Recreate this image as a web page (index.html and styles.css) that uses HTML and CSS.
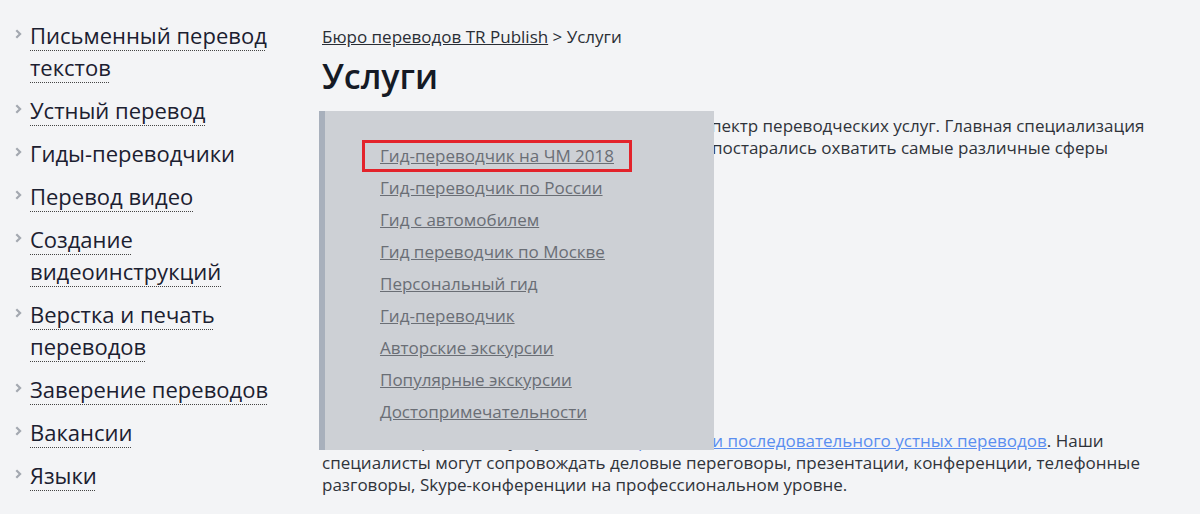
FILE: index.html
```html
<!DOCTYPE html>
<html lang="ru">
<head>
<meta charset="utf-8">
<title>Услуги</title>
<link rel="stylesheet" href="styles.css">
</head>
<body>
<div class="page">
  <aside class="sidebar">
    <ul class="side-menu">
      <li><svg class="chev" viewBox="0 0 7 10" width="7" height="10"><path d="M1.3 1.2l3.8 3.8-3.8 3.8" fill="none" stroke="currentColor" stroke-width="2.2"/></svg><a href="#">Письменный перевод текстов</a></li>
      <li><svg class="chev" viewBox="0 0 7 10" width="7" height="10"><path d="M1.3 1.2l3.8 3.8-3.8 3.8" fill="none" stroke="currentColor" stroke-width="2.2"/></svg><a href="#">Устный перевод</a></li>
      <li><svg class="chev" viewBox="0 0 7 10" width="7" height="10"><path d="M1.3 1.2l3.8 3.8-3.8 3.8" fill="none" stroke="currentColor" stroke-width="2.2"/></svg><span class="current">Гиды-переводчики</span></li>
      <li><svg class="chev" viewBox="0 0 7 10" width="7" height="10"><path d="M1.3 1.2l3.8 3.8-3.8 3.8" fill="none" stroke="currentColor" stroke-width="2.2"/></svg><a href="#">Перевод видео</a></li>
      <li><svg class="chev" viewBox="0 0 7 10" width="7" height="10"><path d="M1.3 1.2l3.8 3.8-3.8 3.8" fill="none" stroke="currentColor" stroke-width="2.2"/></svg><a href="#">Создание видеоинструкций</a></li>
      <li><svg class="chev" viewBox="0 0 7 10" width="7" height="10"><path d="M1.3 1.2l3.8 3.8-3.8 3.8" fill="none" stroke="currentColor" stroke-width="2.2"/></svg><a href="#">Верстка и печать переводов</a></li>
      <li><svg class="chev" viewBox="0 0 7 10" width="7" height="10"><path d="M1.3 1.2l3.8 3.8-3.8 3.8" fill="none" stroke="currentColor" stroke-width="2.2"/></svg><a href="#">Заверение переводов</a></li>
      <li><svg class="chev" viewBox="0 0 7 10" width="7" height="10"><path d="M1.3 1.2l3.8 3.8-3.8 3.8" fill="none" stroke="currentColor" stroke-width="2.2"/></svg><a href="#">Вакансии</a></li>
      <li><svg class="chev" viewBox="0 0 7 10" width="7" height="10"><path d="M1.3 1.2l3.8 3.8-3.8 3.8" fill="none" stroke="currentColor" stroke-width="2.2"/></svg><a href="#">Языки</a></li>
    </ul>
  </aside>
  <main class="content">
    <div class="crumbs"><a href="#">Бюро переводов TR Publish</a> &gt; Услуги</div>
    <h1 class="title">Услуги</h1>
    <p class="text intro">Наше бюро предоставляет клиентам полный спектр переводческих услуг. Главная специализация является письменный перевод текстов, но мы постарались охватить самые различные сферы деятельности.</p>
    <p class="text oral">Компания предлагает услуги для <a class="blue" href="#">синхронного и последовательного устных переводов</a>. Наши специалисты могут сопровождать деловые переговоры, презентации, конференции, телефонные разговоры, Skype-конференции на профессиональном уровне.</p>

    <nav class="dropdown">
      <ul class="drop-list">
        <li class="hl"><a href="#">Гид-переводчик на ЧМ 2018</a></li>
        <li><a href="#">Гид-переводчик по России</a></li>
        <li><a href="#">Гид с автомобилем</a></li>
        <li><a href="#">Гид переводчик по Москве</a></li>
        <li><a href="#">Персональный гид</a></li>
        <li><a href="#">Гид-переводчик</a></li>
        <li><a href="#">Авторские экскурсии</a></li>
        <li><a href="#">Популярные экскурсии</a></li>
        <li><a href="#">Достопримечательности</a></li>
      </ul>
    </nav>
  </main>
</div>
</body>
</html>
```

FILE: styles.css
```css
* { box-sizing: border-box; }
html, body { margin: 0; padding: 0; }
body {
  background: #f3f4f6;
  font-family: "Open Sans", "Noto Sans", sans-serif;
  color: #2b2f36;
  width: 1200px;
  height: 514px;
  overflow: hidden;
}
.page {
  display: flex;
  align-items: flex-start;
}
.sidebar {
  width: 322px;
  flex: none;
  padding: 19px 0 0 15px;
}
.side-menu {
  list-style: none;
  margin: 0;
  padding: 0;
}
.side-menu li {
  display: flex;
  align-items: flex-start;
  font-size: 22px;
  line-height: 32px;
  margin-bottom: 11px;
  color: #1b2030;
}
.chev {
  flex: none;
  color: #a3a8b0;
  margin-top: 10px;
  margin-right: 8px;
}
.side-menu a, .side-menu .current {
  color: #1b2030;
  text-decoration: none;
}
.side-menu li > a, .side-menu li > .current { display: block; max-width: 250px; }
.side-menu a {
  text-decoration: underline dotted #444;
  text-underline-offset: 6px;
  text-decoration-thickness: 1px;
}
.content {
  position: relative;
  flex: 1;
  padding: 26px 40px 0 0;
}
.crumbs {
  font-size: 17px;
  line-height: 22px;
  color: #2a2e35;
}
.crumbs a {
  color: #2a2e35;
  text-decoration: underline;
}
.title {
  margin: 6px 0 0;
  font-size: 34px;
  font-weight: 600;
  line-height: 44px;
  color: #151a25;
}
.text {
  margin: 0;
  font-size: 17px;
  line-height: 22px;
  color: #2f333a;
}
.intro { margin-top: 17px; }
.oral { margin-top: 249px; }
.blue {
  color: #5a8ef0;
  text-decoration: underline;
}
.dropdown {
  position: absolute;
  left: -3px;
  top: 111px;
  width: 395px;
  height: 339px;
  background: #cdd0d5;
  border-left: 6px solid #a8b0bc;
  padding: 29px 0 0 37px;
}
.drop-list {
  list-style: none;
  margin: 0;
  padding: 0;
}
.drop-list li {
  display: table;
  padding: 3px 15px;
  border: 3px solid transparent;
  font-size: 17px;
  line-height: 20px;
}
.drop-list li.hl { border-color: #e3232b; }
.drop-list a {
  color: #6a6e75;
  text-decoration: underline;
}
```
